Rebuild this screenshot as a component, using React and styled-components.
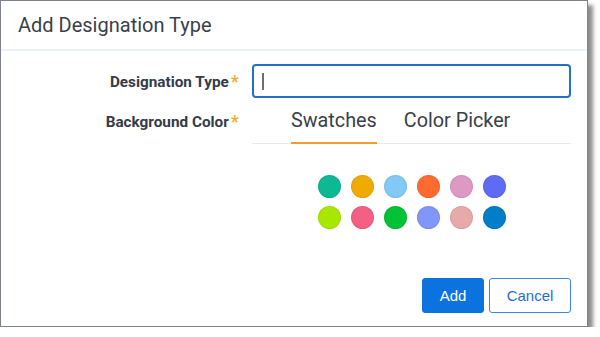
import styled, { createGlobalStyle } from 'styled-components'

const GlobalStyle = createGlobalStyle`
  body {
    margin: 0;
    background: #fff;
    font-family: Roboto, "Liberation Sans", sans-serif;
  }
`

const Dialog = styled.div`
  box-sizing: border-box;
  width: 588px;
  height: 327px;
  border: 1px solid #7d828c;
  background: #fff;
  box-shadow: 5px 5px 4px rgba(0, 0, 0, 0.45);
  display: flex;
  flex-direction: column;
`
const Header = styled.div`
  height: 48px;
  padding-left: 17px;
  display: flex;
  align-items: center;
  border-bottom: 2px solid #edf2f7;
`
const Title = styled.h2`
  margin: 0;
  font-weight: 400;
  font-size: 20px;
  color: #3a3f4a;
`
const Form = styled.div`
  flex: 1;
  display: grid;
  grid-template-columns: 238px 1fr;
  grid-template-rows: 34px 46px auto;
  column-gap: 13px;
  padding: 13px 16px 0 0;
  align-items: center;
`
const Label = styled.label`
  text-align: right;
  font-size: 15.3px;
  font-weight: 700;
  color: #353b47;
  white-space: nowrap;
  span {
    color: #f5a623;
    font-weight: 400;
    font-size: 19px;
    margin-left: 2px;
    vertical-align: -1px;
  }
`
const FakeInput = styled.div`
  box-sizing: border-box;
  height: 34px;
  border: 2px solid #2371c6;
  border-radius: 4px;
  display: flex;
  align-items: center;
  padding-left: 8px;
`
const Caret = styled.i`
  display: block;
  width: 1.5px;
  height: 17px;
  background: #6b6f76;
`
const TabList = styled.div`
  align-self: stretch;
  display: flex;
  gap: 27px;
  padding-left: 39px;
  border-bottom: 1px solid #e6ebf0;
`
const Tab = styled.div`
  display: flex;
  align-items: center;
  font-size: 19.8px;
  color: #3a3f4a;
  border-bottom: 2px solid ${(p) => (p.$active ? '#f39c2d' : 'transparent')};
  margin-bottom: -1px;
`
const Swatches = styled.div`
  grid-column: 2;
  justify-self: center;
  align-self: start;
  margin-top: 31px;
  display: grid;
  grid-template-columns: repeat(6, 23px);
  column-gap: 10px;
  row-gap: 8px;
`
const Swatch = styled.div`
  width: 23px;
  height: 23px;
  border-radius: 50%;
  background: ${(p) => p.$color};
  box-shadow: inset 0 0 0 1px rgba(0, 0, 0, 0.06);
`
const Footer = styled.div`
  display: flex;
  justify-content: flex-end;
  gap: 5px;
  padding: 0 16px 13px 0;
`
const Button = styled.button`
  box-sizing: border-box;
  height: 35px;
  min-width: ${(p) => (p.$primary ? '62px' : '82px')};
  border-radius: 3px;
  font-family: "Liberation Sans", Arial, sans-serif;
  font-size: 15px;
  border: 1px solid ${(p) => (p.$primary ? '#0b72e0' : '#3b86e0')};
  background: ${(p) => (p.$primary ? '#0b72e0' : '#fff')};
  color: ${(p) => (p.$primary ? '#fff' : '#1e6fd0')};
`

const colors = [
  '#0db894', '#f0ab00', '#82c9f5', '#ff6b2e', '#dd98c4', '#5e6cf4',
  '#a8e800', '#f36083', '#00c236', '#8295f8', '#e8a9a9', '#007ec8',
]

export default function App() {
  return (
    <>
      <GlobalStyle />
      <Dialog>
        <Header>
          <Title>Add Designation Type</Title>
        </Header>
        <Form>
          <Label>
            Designation Type<span>*</span>
          </Label>
          <FakeInput>
            <Caret />
          </FakeInput>
          <Label>
            Background Color<span>*</span>
          </Label>
          <TabList>
            <Tab $active>Swatches</Tab>
            <Tab>Color Picker</Tab>
          </TabList>
          <Swatches>
            {colors.map((c) => (
              <Swatch key={c} $color={c} />
            ))}
          </Swatches>
        </Form>
        <Footer>
          <Button $primary>Add</Button>
          <Button>Cancel</Button>
        </Footer>
      </Dialog>
    </>
  )
}
